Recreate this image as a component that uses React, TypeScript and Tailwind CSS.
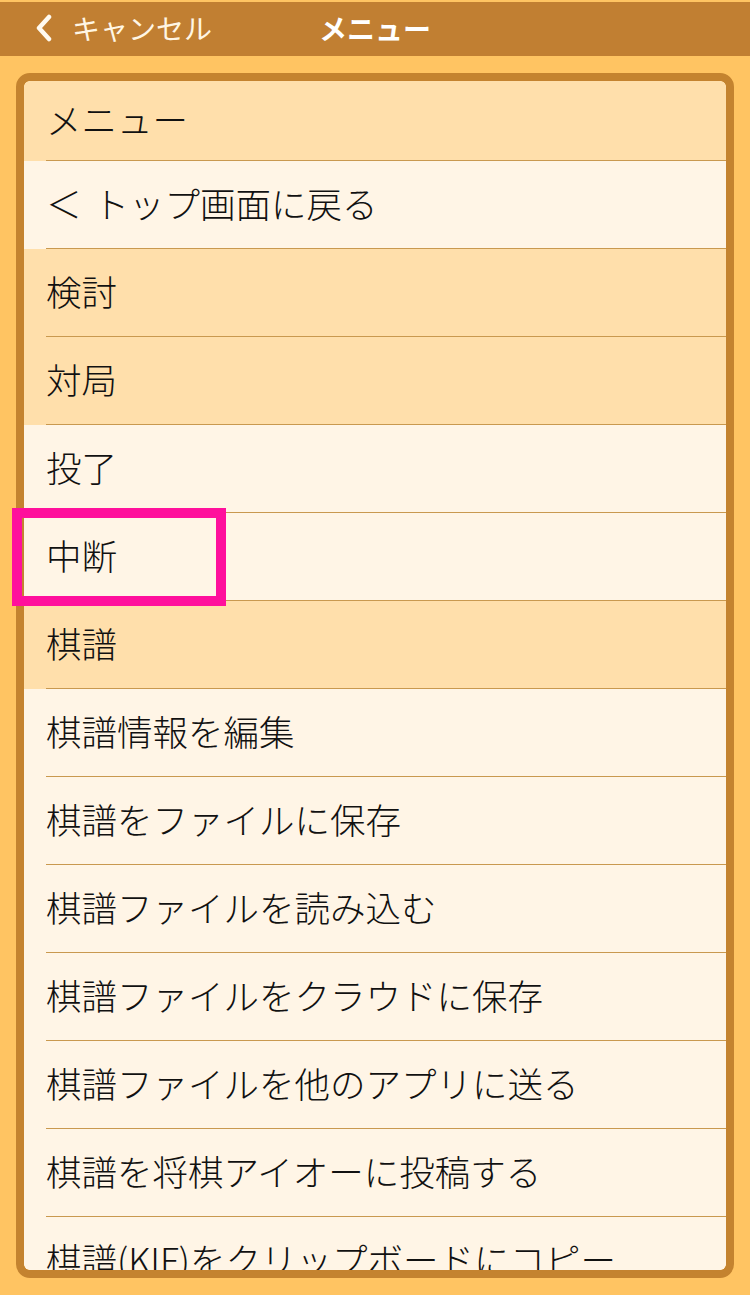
import React from 'react';

type Row = { label: string; header?: boolean; back?: boolean };

const ROWS: Row[] = [
    { label: 'メニュー', header: true },
    { label: 'トップ画面に戻る', back: true },
    { label: '検討', header: true },
    { label: '対局', header: true },
    { label: '投了' },
    { label: '中断' },
    { label: '棋譜', header: true },
    { label: '棋譜情報を編集' },
    { label: '棋譜をファイルに保存' },
    { label: '棋譜ファイルを読み込む' },
    { label: '棋譜ファイルをクラウドに保存' },
    { label: '棋譜ファイルを他のアプリに送る' },
    { label: '棋譜を将棋アイオーに投稿する' },
    { label: '棋譜(KIF)をクリップボードにコピー' },
];

const FONT = { fontFamily: '"Noto Sans CJK JP", "Noto Sans", sans-serif' };

const MenuRow: React.FC<{ row: Row; first?: boolean }> = ({ row, first }) => (
    <div className={`shrink-0 ${row.header ? 'bg-[#ffdfab]' : 'bg-[#fff5e6]'}`}>
        <div className={`ml-[22px] flex items-center pb-[4px] border-b border-[#c9994f] ${first ? 'h-[80px]' : 'h-[88px]'}`}>
            <span className="text-[35.5px] leading-none font-light text-[#111] whitespace-nowrap">
                {row.back && <span className="mr-[12px]">＜</span>}
                {row.label}
            </span>
        </div>
    </div>
);

export default function App() {
    return (
        <div className="w-[750px] h-[1295px] bg-[#ffc462] overflow-hidden relative" style={FONT}>
            {/* Nav bar */}
            <div className="mt-[2px] h-[54px] bg-[#c17f32] relative flex items-center">
                <div className="flex items-center pl-[35px] gap-[19px] pb-[2px]">
                    <svg width="18" height="28" viewBox="0 0 18 28" fill="none">
                        <path d="M14 3 L4 14 L14 25" stroke="#fffaf0" strokeWidth="4.5" strokeLinecap="round" strokeLinejoin="round" />
                    </svg>
                    <span className="text-[28px] leading-none text-[#fff6e4]">キャンセル</span>
                </div>
                <div className="absolute inset-0 flex items-center justify-center pb-[2px] pointer-events-none">
                    <span className="text-[28px] leading-none font-bold text-white">メニュー</span>
                </div>
            </div>

            {/* Panel */}
            <div className="mx-[16px] mt-[17px] h-[1205px] border-[8px] border-[#c4832f] rounded-[14px] overflow-hidden">
                <div className="h-full flex flex-col bg-[#fff5e6] rounded-[6px] overflow-hidden">
                    {ROWS.map((row, i) => (
                        <MenuRow key={row.label} row={row} first={i === 0} />
                    ))}
                </div>
            </div>

            {/* Highlight annotation */}
            <div className="absolute left-[12px] top-[508px] w-[214px] h-[98px] border-[10px] border-[#ff109c]" />
        </div>
    );
}
